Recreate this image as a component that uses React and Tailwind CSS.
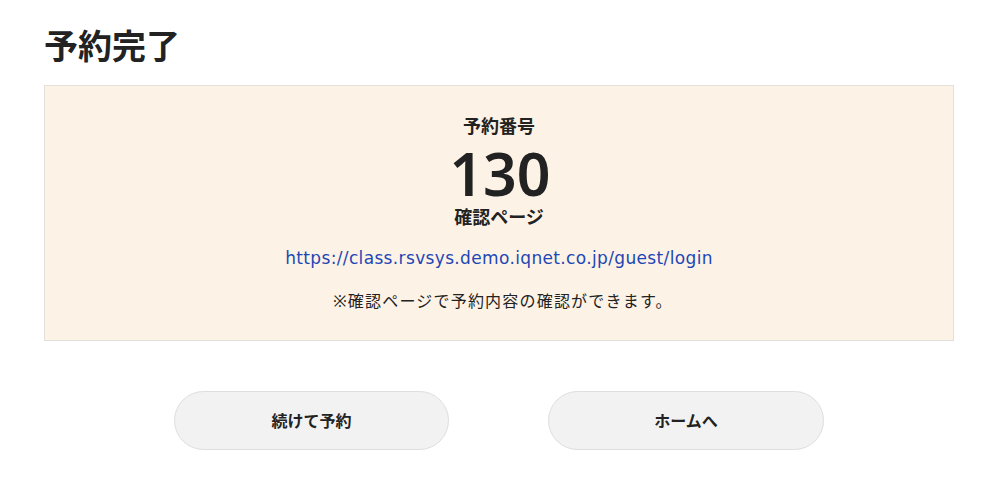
export default function App() {
  return (
    <div className="min-h-screen bg-white pl-[44px] pr-[46px] pt-[26px] text-[#222] font-['Noto_Sans','Noto_Sans_CJK_JP',sans-serif]">
      {/* TITLE */}
      <h1 className="text-[34px] font-bold leading-[40px]">予約完了</h1>

      {/* RESERVATION BOX */}
      <div className="mt-[19px] border border-[#e3e0dc] bg-[#fdf2e6] pt-[26px] pb-[27px] text-center">
        <p className="text-[18px] font-bold leading-[28px]">予約番号</p>
        <p className="mt-[4px] pl-[2px] text-[59px] font-semibold leading-[58px]">130</p>
        <p className="mt-[3px] text-[18px] font-bold leading-[24px]">確認ページ</p>
        <p className="mt-[17px] text-[17px] leading-[24px] tracking-[0.35px] font-['DejaVu_Sans',sans-serif]">
          <a href="#" className="text-[#1d47b5]">https://class.rsvsys.demo.iqnet.co.jp/guest/login</a>
        </p>
        <p className="mt-[19px] pl-[8px] text-[16px] leading-[24px] tracking-[1.2px]">※確認ページで予約内容の確認ができます。</p>
      </div>

      {/* BUTTONS */}
      <div className="mt-[50px] flex justify-center gap-[99px]">
        <button className="h-[59px] w-[275px] rounded-full border border-[#dedede] bg-[#f2f2f2] text-[16px] font-bold">
          続けて予約
        </button>
        <button className="h-[59px] w-[276px] rounded-full border border-[#dedede] bg-[#f2f2f2] text-[16px] font-bold">
          ホームへ
        </button>
      </div>
    </div>
  );
}
